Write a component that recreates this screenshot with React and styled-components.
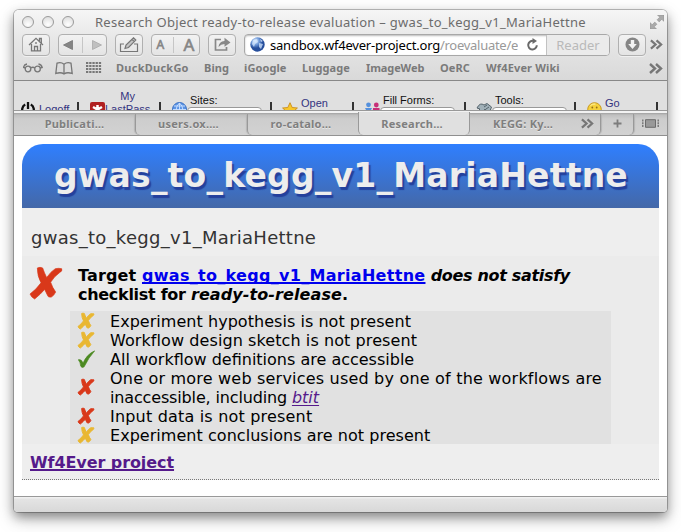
import React from 'react';
import styled, { createGlobalStyle } from 'styled-components';

const Global = createGlobalStyle`
  * { box-sizing: border-box; }
  body { margin: 0; background: #fff; }
`;

const Desktop = styled.div`
  width: 681px; height: 532px; padding: 10px 14px 0; overflow: hidden; background: #fff;
`;
const Window = styled.main`
  display: flex; flex-direction: column; width: 653px; height: 502px; overflow: hidden;
  border-radius: 5px 5px 4px 4px; background: #fff;
  box-shadow: 0 0 0 1px rgba(0,0,0,.24), 0 5px 11px rgba(0,0,0,.38), 0 7px 20px rgba(0,0,0,.18);
`;
const Chrome = styled.header`
  display: flex; flex-direction: column; height: 71px; flex: none;
  background: linear-gradient(#f6f6f6, #e6e6e6 45%, #d9d9d9);
  border-bottom: 1px solid #888; font-family: "Noto Sans", sans-serif; color: #7d7d7d;
`;
const TitleBar = styled.div`
  display: flex; align-items: center; height: 24px; padding: 0 3px 0 8px;
`;
const Lights = styled.div`display: flex; gap: 8px; width: 73px; flex: none;`;
const Light = styled.i`
  width: 12px; height: 12px; border-radius: 50%; border: 1px solid #9b9b9b;
  background: radial-gradient(circle at 50% 75%, #fff, #d8d8d8);
`;
const Title = styled.div`
  flex: 1; font-size: 13px; line-height: 22px; letter-spacing: .285px; white-space: nowrap; color: #6c6c6c;
`;
const Toolbar = styled.div`
  display: flex; align-items: center; height: 23px; padding: 0 4px 0 8px;
`;
const Button = styled.button`
  display: flex; align-items: center; justify-content: space-around; flex: none; height: 22px;
  width: ${p => p.$w || 28}px; margin: 0 ${p => p.$gap ?? 8}px 0 0; padding: 0;
  border: 1px solid #b0b0b0; border-radius: 4px; background: linear-gradient(#f2f2f2, #e4e4e4); color: #777;
  box-shadow: 0 1px 0 rgba(255,255,255,.5);
`;
const Rule = styled.i`width: 1px; height: 16px; background: #c6c6c6;`;
const Letter = styled.span`
  font: ${p => p.$s}px "Noto Sans", sans-serif; line-height: 20px; color: #858585; -webkit-text-stroke: .6px #858585;
`;
const Address = styled.div`
  display: flex; align-items: center; width: 366px; height: 22px; margin-right: 8px; flex: none; overflow: hidden;
  border: 1px solid #a8a8a8; border-radius: 4px; background: #fff; box-shadow: inset 0 1px 2px #bbb;
`;
const Url = styled.div`
  display: flex; width: 253px; padding-left: 5px; overflow: hidden; font-size: 13px; line-height: 20px; white-space: nowrap;
  letter-spacing: -.2px; color: #000;
`;
const Path = styled.span`color: #999; letter-spacing: -.28px;`;
const Reader = styled.div`
  display: flex; align-items: center; justify-content: center; align-self: stretch; flex: 1; margin-left: 7px;
  border-left: 1px solid #c2c2c2; background: #ebebeb; color: #b9b9b9; font-size: 13px;
`;
const Bookmarks = styled.nav`
  display: flex; align-items: center; height: 24px; padding: 0 4px 0 9px; font-size: 11px; font-weight: 700; color: #7a7a7a;
`;
const Mark = styled.span`
  flex: none; width: ${p => p.$w}px; letter-spacing: ${p => p.$ls || 0.1}px; white-space: nowrap; line-height: 22px;
`;
const Slot = styled.span`display: flex; flex: none; width: ${p => p.$w}px;`;
const Push = styled.i`flex: 1;`;

const Extension = styled.section`
  display: flex; flex: none; height: 30px; padding-left: 7px; overflow: hidden; background: #e0e0e0;
  border-bottom: 1px solid #999; font: 11px/13px "Liberation Sans", sans-serif; color: #111;
`;
const Cell = styled.div`
  display: flex; flex: none; align-items: flex-start; width: ${p => p.$w}px; height: 40px;
`;
const Glyph = styled.span`display: flex; flex: none; width: ${p => p.$w || 16}px; padding-top: ${p => p.$t || 21}px;`;
const Label = styled.div`
  padding: ${p => p.$t}px 0 0 0; white-space: nowrap; color: #33337f;
`;
const Centered = styled(Label)`text-align: center;`;
const Bar = styled.i`width: 2px; height: 20px; margin: 21px ${p => p.$r}px 0 -1px; background: #333; flex: none;`;
const Field = styled.div`display: flex; flex-direction: column; padding-top: 12px;`;
const FieldLabel = styled.span`padding-left: 3px; height: 14px; line-height: 14px; white-space: nowrap;`;
const Select = styled.div`
  width: 75px; height: 20px; padding: 0 7px; border: 1px solid #999; border-radius: 4px; background: #fff; line-height: 13px;
  font-size: 10px;
`;

const Tabs = styled.nav`
  display: flex; flex: none; height: 25px; padding-top: 1px; background: linear-gradient(#f2f2f2 2px, #a0a0a0 2px, #c0c0c0 4px, #cdcdcd 8px, #d2d2d2);
  border-bottom: 1px solid #8f8f8f; font: 700 11px "Noto Sans", sans-serif; color: #7f7f7f;
`;
const Tab = styled.div`
  display: flex; align-items: center; justify-content: center; width: ${p => p.$w}px; height: 21px; margin-top: 2px; flex: none;
  padding: 0 ${p => p.$pr || 0}px 2px ${p => p.$pl || 0}px; letter-spacing: .25px; text-shadow: 0 1px 0 #e8e8e8;
  ${p => p.$side === 'left' && 'border-left: 1px solid #999; border-bottom-left-radius: 5px; box-shadow: -1px 0 1px #b5b5b5;'}
  ${p => p.$side === 'right' && 'border-right: 1px solid #999; border-bottom-right-radius: 5px; box-shadow: 1px 0 1px #b5b5b5;'}
  ${p => p.$active && 'margin-top: 0; height: 23px; padding-bottom: 1px; background: #e0e0e0; border-left: 1px solid #999; border-right: 1px solid #999; border-radius: 0 0 5px 5px;'}
`;

const Page = styled.article`
  display: flex; flex-direction: column; flex: 1; padding: 8px 8px 0; background: #fff;
  font: 16px/19px "DejaVu Sans", sans-serif; color: #000;
`;
const Banner = styled.h1`
  height: 64px; margin: 0; padding-left: 32px; border-radius: 21px 21px 0 0; background: linear-gradient(#2f7fff, #4468a8);
  color: #ededed; font-size: 33px; line-height: 64px; letter-spacing: .22px; white-space: nowrap; text-shadow: 2px 3px 1px #24409c;
`;
const Subject = styled.div`
  height: 48px; padding: 20px 9px 0; background: #eee; color: #333; font-size: 18px; line-height: 20px; letter-spacing: .28px;
`;
const Report = styled.section`
  display: flex; flex-direction: column; height: 188px; padding-left: 8px; background: #ebebeb;
`;
const Verdict = styled.div`display: flex; height: 55px; padding-top: 10px;`;
const VerdictIcon = styled.div`width: 48px; padding-top: 1px; flex: none;`;
const VerdictText = styled.div`font-weight: 700; white-space: nowrap;`;
const Line = styled.div`height: 19px;`;
const Run = styled.span`letter-spacing: ${p => p.$ls || 0}px; font-style: ${p => (p.$i ? 'italic' : 'normal')};`;
const Link = styled.a`
  color: ${p => (p.$seen ? '#551a8b' : '#00e')}; text-decoration: underline; text-decoration-thickness: ${p => (p.$bold ? 2 : 1)}px;
  text-underline-offset: ${p => (p.$bold ? 1 : 2)}px; text-decoration-skip-ink: none; letter-spacing: ${p => p.$ls || 0}px;
  font-weight: ${p => (p.$bold ? 700 : 400)}; font-style: ${p => (p.$i ? 'italic' : 'normal')};
`;
const Checklist = styled.ul`
  width: 541px; margin: 0 0 0 40px; padding: 0 0 0 8px; list-style: none; background: #e1e1e1;
`;
const Item = styled.li`display: flex; align-items: center;`;
const ItemIcon = styled.span`display: flex; width: 32px; flex: none;`;
const ItemText = styled.div`white-space: nowrap; line-height: 21px;`;
const Footer = styled.footer`
  height: 36px; padding: 9px 8px 0; background: #eee; border-bottom: 1px dotted #777;
`;
const StatusBar = styled.div`
  height: 16px; flex: none; border-top: 1px solid #999; background: linear-gradient(#f0f0f0 1px, #e4e4e4 2px, #d8d8d8);
`;

const Cross = ({ size, color }) => (
  <svg width={size} height={size} viewBox="0 0 96 97" preserveAspectRatio="none" overflow="visible">
    <path fill={color} stroke={color} strokeWidth={size < 20 ? 6 : 2} d="M22 3Q30-1 38 3Q43 18 50 32Q62 14 76 5Q86 3 95 5Q98 12 90 16Q73 28 62 46Q67 62 77 76Q71 88 64 91Q53 93 52 85L44 68Q31 83 14 97Q4 92 0 82Q19 68 33 48Q22 28 22 3Z" />
  </svg>
);
const Tick = () => (
  <svg width="17" height="18" viewBox="0 0 50 52">
    <path fill="#4c8a22" stroke="#4c8a22" strokeWidth="2" d="M1 28Q10 26 15 38Q25 13 49 2Q31 22 18 49Q12 54 8 47Q7 35 1 28Z" />
  </svg>
);
const More = ({ s = 14 }) => (
  <svg width={s} height="11" viewBox="0 0 14 11" fill="none" stroke="#777" strokeWidth="2.400"><path d="M1 1l5 4.500L1 10M7 1l5 4.500L7 10" /></svg>
);
const Globe = ({ s = 15 }) => (
  <svg width={s} height={s} viewBox="0 0 15 15">
    <defs><radialGradient id="globe" cx=".35" cy=".25"><stop stopColor="#dceafc" /><stop offset=".55" stopColor="#6d98d8" /><stop offset="1" stopColor="#264e9c" /></radialGradient></defs>
    <circle cx="7.5" cy="7.5" r="7.2" fill="url(#globe)" />
    <path d="M3 3l4-1 1 3-3 2-1 3-2-3zM9 6l4 1-2 5-2-2zM10 2l3 2-2 1z" fill="#d5e8ff" opacity=".75" />
  </svg>
);
const GridGlobe = () => (
  <svg width="15" height="15" viewBox="0 0 15 15"><circle cx="7.5" cy="7.5" r="7" fill="#5b94e6" stroke="#3a70c2" /><path d="M7.5 1v13M1 7.5h13M2 4h11M2 11h11M7.5 1Q1 7 7.5 14Q14 7 7.5 1" fill="none" stroke="#cfe3ff" strokeWidth=".9" /></svg>
);
const Home = () => (
  <svg width="16" height="15" viewBox="0 0 16 15" fill="none" stroke="#777" strokeWidth="1.3"><path d="M1 8L8 1.4l7 6.6M3.5 7v6.8h9V7M11.5 4V1.5h1.8V6" /><path d="M6.5 14V9.5h3V14" /><path d="M8 5v2" /></svg>
);
const Triangle = ({ left }) => (
  <svg width="10" height="10" viewBox="0 0 10 10"><path d={left ? 'M9.5 .5v9L.5 5z' : 'M.5 .5v9l9-4.5z'} fill={left ? '#858585' : '#c0c0c0'} stroke={left ? '#777' : '#aaa'} strokeWidth=".8" /></svg>
);
const Compose = () => (
  <svg width="20" height="16" viewBox="0 0 20 16" fill="none" stroke="#777" strokeWidth="1.2"><path d="M5 7H1.5v7.5h17V7H15" /><path d="M6 11.5l1-3.500 7.500-7.200 2.300 2.300L9.500 10.500zM13 2.300l2.300 2.300" fill="#c4c4c4" /></svg>
);
const Share = () => (
  <svg width="17" height="15" viewBox="0 0 17 15"><path d="M7 2.500H1.500v10.500h11V10" fill="none" stroke="#888" strokeWidth="1.700" /><path d="M4.500 10Q5 4.500 10.500 4V.8l6 4.700-6 4.300V7Q7 7 4.500 10z" fill="#888" /></svg>
);
const Reload = () => (
  <svg width="13" height="13" viewBox="0 0 13 13"><path d="M10.800 7.200A4.300 4.300 0 1 1 7.500 3" fill="none" stroke="#6a6a6a" strokeWidth="2" /><path d="M6.500 0v6l4.500-3z" fill="#6a6a6a" /></svg>
);
const Download = () => (
  <svg width="15" height="15" viewBox="0 0 15 15"><circle cx="7.500" cy="7.500" r="7" fill="#858585" /><path d="M5.800 3h3.400v4h2.600l-4.300 5-4.300-5h2.600z" fill="#f3f3f3" /></svg>
);
const Expand = () => (
  <svg width="14" height="14" viewBox="0 0 14 14"><path d="M7.500 0H14v6.500l-2.200-2.200-2.600 2.600-2.100-2.100 2.600-2.600zM0 7.500V14h6.500l-2.200-2.200 2.600-2.600-2.100-2.100-2.600 2.600z" fill="#aaa" stroke="#888" strokeWidth=".5" /></svg>
);
const Glasses = () => (
  <svg width="20" height="10" viewBox="0 0 20 10" fill="none" stroke="#777" strokeWidth="1.300"><circle cx="5" cy="6" r="2.800" /><circle cx="14.500" cy="6" r="2.800" /><path d="M7.500 5q2.300-1.500 4.500 0M2.500 5L.5 4.500Q1 1.500 4 1M17 5l2.200-.5Q18.500 1.500 15.500 1" /></svg>
);
const Book = () => (
  <svg width="18" height="13" viewBox="0 0 18 13" fill="none" stroke="#777" strokeWidth="1.300"><path d="M9 2.200Q6-.2 2 1.200L.8 11.500Q6 9.800 9 12Q12 9.800 17.200 11.500L16 1.200Q12-.2 9 2.200V12" /></svg>
);
const Dots = () => (
  <svg width="16" height="12" viewBox="0 0 16 12" fill="#777">{[0, 3, 6, 9].map(y => [0, 3.2, 6.4, 9.6, 12.8].map(x => <rect key={x + '-' + y} x={x} y={y} width="2.300" height="2" />))}</svg>
);
const Power = () => (
  <svg width="14" height="14" viewBox="0 0 14 14" fill="none" stroke="#111" strokeWidth="2.300"><path d="M4.200 2.500A5.800 5.800 0 1 0 9.800 2.500M7 0v7" /></svg>
);
const LastPassLogo = () => (
  <svg width="15" height="15" viewBox="0 0 15 15"><rect width="15" height="15" rx="2" fill="#b02020" /><path d="M7.500 3v9M3 5l9 5M12 5l-9 5" stroke="#fff" strokeWidth="2.500" /></svg>
);
const Star = () => (
  <svg width="16" height="16" viewBox="0 0 16 16"><path d="M8 .7l2.200 4.800 5.200.5-3.900 3.500 1.200 5.200L8 12l-4.700 2.700 1.200-5.200L.6 6l5.200-.5z" fill="#f8c72c" stroke="#c88c1c" strokeWidth=".9" /></svg>
);
const People = () => (
  <svg width="15" height="15" viewBox="0 0 15 15"><g fill="#5590dc"><circle cx="3.500" cy="2.800" r="2.400" /><path d="M0 6h7l-1.500 3v6h-4V9z" /></g><g fill="#c83078"><circle cx="11.300" cy="3" r="2.400" /><path d="M8 6h6.500l.5 9H7.500z" /></g></svg>
);
const Wrench = () => (
  <svg width="16" height="15" viewBox="0 0 16 15" fill="#a0b0b8" stroke="#56646c" strokeWidth="1"><path d="M1 6Q4 0 8 3l3-1.500L15.500 5 14 9l-2.500 1L9 7l-4 5-4-2 3-3z" /><path d="M8 5l3-2M10 7l3-2" /></svg>
);
const Coin = () => (
  <svg width="15" height="15" viewBox="0 0 15 15"><circle cx="7.500" cy="7.500" r="6.800" fill="#f5d13c" stroke="#c8981c" /><circle cx="5.300" cy="5.500" r=".9" fill="#94701a" /><circle cx="9.700" cy="5.500" r=".9" fill="#94701a" /><path d="M4 9q3.500 3 7 0" stroke="#94701a" fill="none" /><path d="M3.500 3.500q2-2 5-1.500" stroke="#fff3a8" fill="none" /></svg>
);
const Plus = () => (
  <svg width="9" height="9" viewBox="0 0 9 9"><path d="M4.500 .5v8M.5 4.500h8" stroke="#7d7d7d" strokeWidth="1.800" /></svg>
);
const AllTabs = () => (
  <svg width="17" height="9" viewBox="0 0 17 9" fill="#999" stroke="#6c6c6c"><path d="M3.500 .7h10v7.600h-10z" /><path d="M.8 .5v8M16.200 .5v8" strokeWidth="1.300" strokeDasharray="2 .7" /></svg>
);

const YELLOW = '#e9b732';
const RED = '#d9381a';
const CHECKS = [
  { color: YELLOW, lines: [['Experiment hypothesis is not present', 0.04]] },
  { color: YELLOW, lines: [['Workflow design sketch is not present', 0.085]] },
  { lines: [['All workflow definitions are accessible', 0]] },
  { color: RED, lines: [['One or more web services used by one of the workflows are', 0.2], ['inaccessible, including ', -0.15]], link: 'btit' },
  { color: RED, lines: [['Input data is not present', 0.19]] },
  { color: YELLOW, lines: [['Experiment conclusions are not present', 0.04]] },
];

export default function App() {
  return (
    <Desktop>
      <Global />
      <Window>
        <Chrome>
          <TitleBar>
            <Lights><Light /><Light /><Light /></Lights>
            <Title>Research Object ready-to-release evaluation – gwas_to_kegg_v1_MariaHettne</Title>
            <Expand />
          </TitleBar>
          <Toolbar>
            <Button><Home /></Button>
            <Button $w={49}><Triangle left /><Rule /><Triangle /></Button>
            <Button><Compose /></Button>
            <Button $w={49}><Letter $s={12}>A</Letter><Rule /><Letter $s={17}>A</Letter></Button>
            <Button><Share /></Button>
            <Address>
              <Slot $w={5} /><Globe />
              <Url><span>sandbox.wf4ever-project.org</span><Path>/roevaluate/e</Path></Url>
              <Slot $w={8} /><Reload />
              <Reader>Reader</Reader>
            </Address>
            <Button $gap={4}><Download /></Button>
            <More />
          </Toolbar>
          <Bookmarks>
            <Slot $w={32}><Glasses /></Slot>
            <Slot $w={31}><Book /></Slot>
            <Slot $w={30}><Dots /></Slot>
            <Mark $w={88} $ls={0.25}>DuckDuckGo</Mark>
            <Mark $w={40}>Bing</Mark>
            <Mark $w={58}>iGoogle</Mark>
            <Mark $w={64}>Luggage</Mark>
            <Mark $w={74} $ls={-0.1}>ImageWeb</Mark>
            <Mark $w={46}>OeRC</Mark>
            <Mark $w={80} $ls={0.15}>Wf4Ever Wiki</Mark>
            <Push /><More />
          </Bookmarks>
        </Chrome>
        <Extension>
          <Cell $w={57}><Glyph $w={18}><Power /></Glyph><Label $t={22}>Logoff</Label></Cell>
          <Bar $r={11} />
          <Cell $w={70}><Glyph $w={15}><LastPassLogo /></Glyph><Centered $t={9}>My<br />LastPass</Centered></Cell>
          <Bar $r={11} />
          <Cell $w={99}><Glyph $w={15}><GridGlobe /></Glyph><Field><FieldLabel>Sites:</FieldLabel><Select>Select</Select></Field></Cell>
          <Bar $r={10} />
          <Cell $w={71}><Glyph $w={19}><Star /></Glyph><Label $t={16}>Open</Label></Cell>
          <Bar $r={11} />
          <Cell $w={100}><Glyph $w={15}><People /></Glyph><Field><FieldLabel>Fill Forms:</FieldLabel><Select>Select</Select></Field></Cell>
          <Bar $r={10} />
          <Cell $w={99}><Glyph $w={16}><Wrench /></Glyph><Field><FieldLabel>Tools:</FieldLabel><Select>Select</Select></Field></Cell>
          <Bar $r={11} />
          <Cell $w={70}><Glyph $w={18}><Coin /></Glyph><Label $t={16}>Go</Label></Cell>
          <Bar $r={0} />
        </Extension>
        <Tabs>
          <Tab $w={121}>Publicati…</Tab>
          <Tab $w={112} $side="left" $pr={6}>users.ox.…</Tab>
          <Tab $w={111} $side="left" $pr={4}>ro-catalo…</Tab>
          <Tab $w={112} $active $pr={4}>Research…</Tab>
          <Tab $w={131} $side="right" $pl={17}>KEGG: Ky…<Slot $w={28} /><More s={13} /></Tab>
          <Tab $w={33} $side="right"><Plus /></Tab>
          <Tab $w={33}><AllTabs /></Tab>
        </Tabs>
        <Page>
          <Banner>gwas_to_kegg_v1_MariaHettne</Banner>
          <Subject>gwas_to_kegg_v1_MariaHettne</Subject>
          <Report>
            <Verdict>
              <VerdictIcon><Cross size={32} color={RED} /></VerdictIcon>
              <VerdictText>
                <Line><Run $ls={0.13}>Target </Run><Link $bold $ls={0.3}>gwas_to_kegg_v1_MariaHettne</Link><Run $i $ls={-0.32}> does not satisfy</Run></Line>
                <Line><Run $ls={-0.29}>checklist for </Run><Run $i $ls={0.09}>ready-to-release</Run>.</Line>
              </VerdictText>
            </Verdict>
            <Checklist>
              {CHECKS.map(({ color, lines, link }) => (
                <Item key={lines[0][0]}>
                  <ItemIcon>{color ? <Cross size={16} color={color} /> : <Tick />}</ItemIcon>
                  <ItemText>
                    {lines.map(([text, ls], i) => (
                      <Line key={text}><Run $ls={ls}>{text}</Run>{link && i === 1 && <Link $seen $i href="#btit">{link}</Link>}</Line>
                    ))}
                  </ItemText>
                </Item>
              ))}
            </Checklist>
          </Report>
          <Footer><Link $seen $bold $ls={-0.08} href="#project">Wf4Ever project</Link></Footer>
        </Page>
        <StatusBar />
      </Window>
    </Desktop>
  );
}
